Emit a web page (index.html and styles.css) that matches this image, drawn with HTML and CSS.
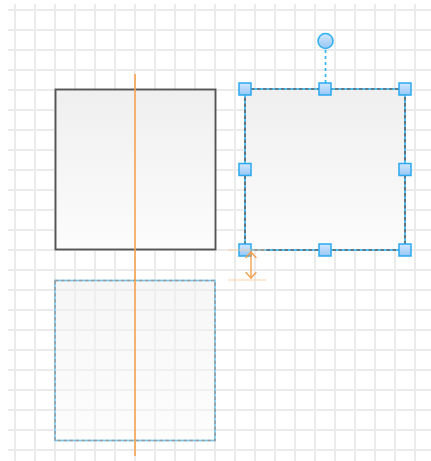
FILE: index.html
```html
<!DOCTYPE html>
<html>
<head>
<meta charset="utf-8">
<link rel="stylesheet" href="styles.css">
</head>
<body>
<div class="board">
  <svg class="diagram" width="431" height="461" viewBox="0 0 431 461" xmlns="http://www.w3.org/2000/svg">
    <defs>
      <linearGradient id="fill" x1="0" y1="0" x2="0" y2="1">
        <stop offset="0" stop-color="#efefef"/>
        <stop offset="1" stop-color="#fcfcfc"/>
      </linearGradient>
      <linearGradient id="ghost" x1="0" y1="0" x2="0" y2="1">
        <stop offset="0" stop-color="#efefef" stop-opacity="0.55"/>
        <stop offset="1" stop-color="#fafafa" stop-opacity="0.45"/>
      </linearGradient>
      <linearGradient id="handle" x1="0" y1="0" x2="0" y2="1">
        <stop offset="0" stop-color="#d2e7ff"/>
        <stop offset="1" stop-color="#97c6f6"/>
      </linearGradient>
    </defs>

    <!-- ghost preview shape -->
    <g class="ghost">
      <rect x="55" y="280.5" width="160" height="160" fill="url(#ghost)"/>
      <rect x="55" y="280.5" width="160" height="160" fill="none" stroke="#74cdf7" stroke-width="1.6"/>
      <rect x="55" y="280.5" width="160" height="160" fill="none" stroke="#9a9a9a" stroke-width="1.6" stroke-dasharray="3.5 2.5"/>
    </g>

    <!-- shape 1 -->
    <rect x="55.5" y="89.5" width="160" height="160" fill="url(#fill)" stroke="#555" stroke-width="1.9"/>

    <!-- shape 2 (selected) -->
    <rect x="245" y="89" width="160" height="161" fill="url(#fill)"/>
    <rect x="245" y="89" width="160" height="161" fill="none" stroke="#33b8f7" stroke-width="1.7"/>
    <rect x="245" y="89" width="160" height="161" fill="none" stroke="#666" stroke-width="1.7" stroke-dasharray="3.5 2.5"/>

    <!-- rotation connector -->
    <line x1="325.5" y1="50" x2="325.5" y2="83" stroke="#33b8f7" stroke-width="1.7" stroke-dasharray="3 3"/>
    <circle cx="325.5" cy="41" r="7.5" fill="url(#handle)" stroke="#2fb0f2" stroke-width="1.6"/>

    <!-- handles -->
    <g class="handles" fill="url(#handle)" stroke="#2aa9ef" stroke-width="1.5">
      <rect x="239" y="83" width="12" height="12"/>
      <rect x="319" y="83" width="12" height="12"/>
      <rect x="399" y="83" width="12" height="12"/>
      <rect x="239" y="163.5" width="12" height="12"/>
      <rect x="399" y="163.5" width="12" height="12"/>
      <rect x="239" y="244" width="12" height="12"/>
      <rect x="319" y="244" width="12" height="12"/>
      <rect x="399" y="244" width="12" height="12"/>
    </g>

    <!-- orange guides -->
    <line x1="135" y1="74" x2="135" y2="456" stroke="#f6a24f" stroke-width="1.6"/>
    <line x1="228" y1="250" x2="266" y2="250" stroke="#fcc89a" stroke-width="1.2" stroke-opacity="0.8"/>
    <line x1="228" y1="280" x2="266" y2="280" stroke="#fcd2ad" stroke-width="1.2"/>
    <g fill="none" stroke="#f5a04c" stroke-width="1.4" stroke-linecap="round" stroke-linejoin="round">
      <line x1="251" y1="252" x2="251" y2="278"/>
      <polyline points="246,257.5 251,252 256,257.5"/>
      <polyline points="246,272.5 251,278 256,272.5"/>
    </g>
  </svg>
</div>
</body>
</html>
```

FILE: styles.css
```css
html, body {
  margin: 0;
  padding: 0;
  background: #ffffff;
}

.board {
  position: relative;
  width: 431px;
  height: 461px;
  box-sizing: border-box;
  padding: 4px 0 0 8px;
  overflow: hidden;
  background-clip: content-box;
  background-origin: content-box;
  background-color: #ffffff;
  background-image:
    linear-gradient(to right, transparent 6px, #ebebeb 6px, #ebebeb 8px, transparent 8px),
    linear-gradient(to bottom, transparent 5px, #ebebeb 5px, #ebebeb 7px, transparent 7px);
  background-size: 20px 20px;
}

.diagram {
  position: absolute;
  left: 0;
  top: 0;
  display: block;
}
```
